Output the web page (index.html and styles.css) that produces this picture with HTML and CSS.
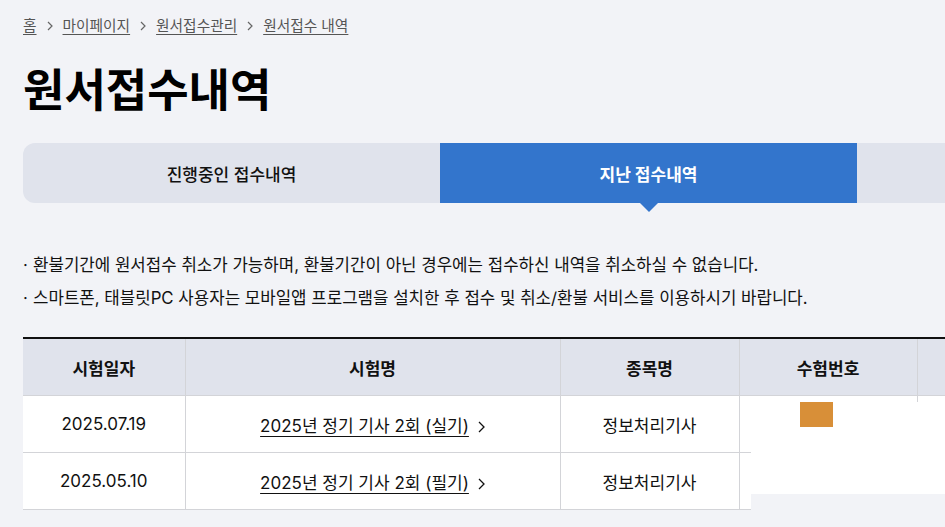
FILE: index.html
```html
<!DOCTYPE html>
<html lang="ko">
  <head>
    <meta charset="UTF-8" />
    <meta name="viewport" content="width=device-width, initial-scale=1.0" />
    <title>원서접수내역</title>
    <link rel="stylesheet" href="styles.css">
  </head>
  <body>
    <div class="container">
      <nav class="breadcrumb">
        <a href="#">홈</a>
        <span class="sep"><svg width="6" height="10" viewBox="0 0 6 10"><path d="M1 1l4 4-4 4" fill="none" stroke="#666" stroke-width="1.2"/></svg></span>
        <a href="#">마이페이지</a>
        <span class="sep"><svg width="6" height="10" viewBox="0 0 6 10"><path d="M1 1l4 4-4 4" fill="none" stroke="#666" stroke-width="1.2"/></svg></span>
        <a href="#">원서접수관리</a>
        <span class="sep"><svg width="6" height="10" viewBox="0 0 6 10"><path d="M1 1l4 4-4 4" fill="none" stroke="#666" stroke-width="1.2"/></svg></span>
        <a href="#">원서접수 내역</a>
      </nav>

      <h1 class="page-title">원서접수내역</h1>

      <div class="tabs">
        <a href="#" class="tab">진행중인 접수내역</a>
        <a href="#" class="tab active">지난 접수내역</a>
        <a href="#" class="tab"></a>
      </div>

      <ul class="notes">
        <li>환불기간에 원서접수 취소가 가능하며, 환불기간이 아닌 경우에는 접수하신 내역을 취소하실 수 없습니다.</li>
        <li>스마트폰, 태블릿PC 사용자는 모바일앱 프로그램을 설치한 후 접수 및 취소/환불 서비스를 이용하시기 바랍니다.</li>
      </ul>

      <div class="table-wrap">
        <table class="history">
          <colgroup>
            <col style="width: 162px" />
            <col style="width: 375px" />
            <col style="width: 179px" />
            <col style="width: 178px" />
            <col />
          </colgroup>
          <thead>
            <tr>
              <th>시험일자</th>
              <th>시험명</th>
              <th>종목명</th>
              <th>수험번호</th>
              <th></th>
            </tr>
          </thead>
          <tbody>
            <tr>
              <td>2025.07.19</td>
              <td>
                <a href="#" class="exam-link">2025년 정기 기사 2회 (실기)</a><svg class="chev" width="7" height="12" viewBox="0 0 7 12"><path d="M1 1l5 5-5 5" fill="none" stroke="#111" stroke-width="1.3"/></svg>
              </td>
              <td>정보처리기사</td>
              <td></td>
              <td></td>
            </tr>
            <tr>
              <td>2025.05.10</td>
              <td>
                <a href="#" class="exam-link">2025년 정기 기사 2회 (필기)</a><svg class="chev" width="7" height="12" viewBox="0 0 7 12"><path d="M1 1l5 5-5 5" fill="none" stroke="#111" stroke-width="1.3"/></svg>
              </td>
              <td>정보처리기사</td>
              <td></td>
              <td></td>
            </tr>
          </tbody>
        </table>
        <div class="mask"><span class="mask-mark"></span></div>
      </div>
    </div>
  </body>
</html>
```

FILE: styles.css
```css
html, body {
  overflow: hidden;
}

body {
  margin: 0;
  background-color: #f2f3f7;
  color: #111;
  font-family: Inter, "Noto Sans CJK KR", sans-serif;
}

.container {
  width: 1251px;
  padding: 15px 0 40px 23px;
}

.breadcrumb {
  display: flex;
  align-items: center;
  gap: 10px;
  font-size: 14.7px;
  line-height: 22px;
}

.breadcrumb a {
  color: #555;
  text-decoration: underline;
  text-underline-offset: 3px;
}

.breadcrumb .sep {
  display: flex;
  align-items: center;
}

.page-title {
  margin: 25px 0 0;
  font-size: 45px;
  line-height: 57px;
  font-weight: 700;
  color: #000;
}

.tabs {
  margin-top: 24px;
  display: grid;
  grid-template-columns: repeat(3, 417px);
  height: 60px;
  border-radius: 12px 0 0 12px;
  background-color: #e0e3ec;
}

.tab {
  display: flex;
  align-items: center;
  justify-content: center;
  font-size: 17px;
  font-weight: 500;
  color: #111;
  text-decoration: none;
}

.tab.active {
  position: relative;
  background-color: #3375cc;
  color: #fff;
  font-weight: 700;
}

.tab.active::after {
  content: "";
  position: absolute;
  top: 100%;
  left: 50%;
  margin-left: -9px;
  border-left: 9px solid transparent;
  border-right: 9px solid transparent;
  border-top: 9px solid #3375cc;
}

.notes {
  list-style: none;
  margin: 46px 0 0;
  padding: 0;
  font-size: 16.8px;
  line-height: 33px;
}

.notes li {
  display: flex;
}

.notes li::before {
  content: "·";
  width: 10px;
  flex-shrink: 0;
}

.table-wrap {
  position: relative;
  margin-top: 22px;
}

.history {
  width: 1228px;
  table-layout: fixed;
  border-collapse: collapse;
  border-top: 2px solid #111;
  font-size: 17px;
}

.history th,
.history td {
  height: 56px;
  padding: 0;
  text-align: center;
  border-left: 1px solid #d3d4d8;
  border-bottom: 1px solid #d3d4d8;
}

.history th:first-child,
.history td:first-child {
  border-left: 0;
}

.history th {
  background-color: #e0e3ec;
  font-weight: 700;
}

.history td {
  background-color: #fff;
}

.exam-link {
  color: #111;
  text-decoration: underline;
  text-underline-offset: 4px;
}

.chev {
  margin-left: 9px;
  vertical-align: -1px;
}

.mask {
  position: absolute;
  left: 728px;
  top: 65px;
  width: 194px;
  height: 110px;
  background: linear-gradient(#fff 92px, #f2f3f7 92px);
}

.mask-mark {
  position: absolute;
  left: 49px;
  top: 0;
  width: 33px;
  height: 25px;
  background-color: #d88f38;
}
```
